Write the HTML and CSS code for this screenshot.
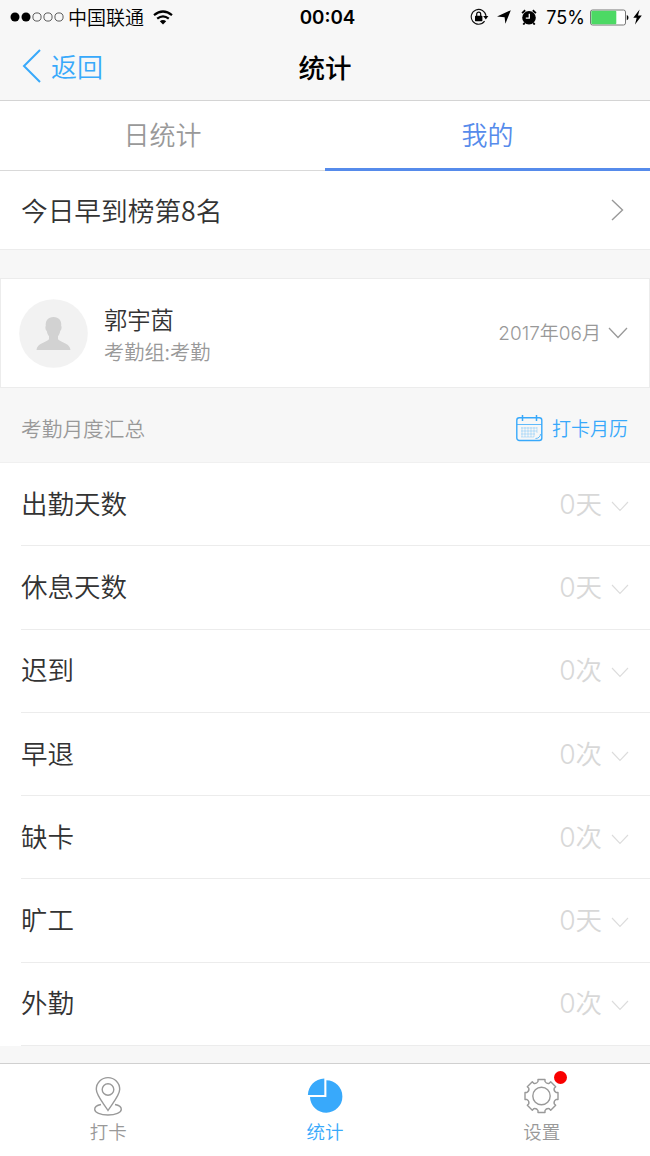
FILE: index.html
```html
<!DOCTYPE html>
<html lang="zh-CN">
<head>
<meta charset="UTF-8" />
<meta name="viewport" content="width=device-width, initial-scale=1.0" />
<title>统计</title>
<link rel="stylesheet" href="styles.css">
</head>
<body>

<!-- STATUS BAR -->
<div class="status">
  <div class="status-left">
    <svg class="signal" width="54" height="10" viewBox="0 0 54 10">
      <circle cx="5" cy="5" r="4.5" /><circle cx="16" cy="5" r="4.5" />
      <g fill="none" stroke="#333" stroke-width=".8"><circle cx="27" cy="5" r="4.1" /><circle cx="38" cy="5" r="4.1" /><circle cx="49" cy="5" r="4.1" /></g>
    </svg>
    <span class="carrier">中国联通</span>
    <svg class="wifi" width="20" height="15" viewBox="0 0 20 15">
      <g fill="none" stroke="#000" stroke-width="2.2"><path d="M1 5.2Q10-2.2 19 5.2" /><path d="M4.2 8.7Q10 4 15.8 8.7" /></g>
      <path d="M6.8 11.2Q10 8.6 13.2 11.2L10 14.4z" />
    </svg>
  </div>
  <div class="clock">00:04</div>
  <div class="status-right">
    <svg width="19" height="18" viewBox="0 0 19 18">
      <path d="M14.6 13.2A7.4 7.4 0 1 1 16 8" fill="none" stroke="#111" stroke-width="1.1" />
      <path d="M13.2 8h5.2l-2.6 3.4z" />
      <rect x="5" y="7.8" width="7.4" height="5.4" rx=".6" />
      <path d="M6.7 8V6.2a2 2 0 0 1 4 0V8" fill="none" stroke="#000" stroke-width="1.2" />
    </svg>
    <svg class="locate" width="14" height="14" viewBox="0 0 14 14"><path d="M13.8.2L8.4 13.8 7.6 7.2 0 6.6z" /></svg>
    <svg class="alarm" width="16" height="16" viewBox="0 0 16 16">
      <circle cx="8" cy="8.8" r="6.8" />
      <path d="M3.6 14l-1.3 1.6M12.4 14l1.3 1.6M1.1 4.1L4.2 1.3M14.9 4.1L11.8 1.3" stroke="#000" stroke-width="1.9" />
      <path d="M8.3 4.8v4.3H4.8" fill="none" stroke="#fff" stroke-width="1.3" />
    </svg>
    <span class="percent">75%</span>
    <svg class="battery" width="40" height="17" viewBox="0 0 40 17">
      <rect x=".5" y="1" width="35" height="15" rx="2" fill="#fff" stroke="#777" stroke-width="1" />
      <rect x="1.3" y="1.8" width="25" height="13.4" rx="1" fill="#4cd964" />
      <path d="M36.8 6c2.2.8 2.2 4.4 0 5.2z" />
    </svg>
    <svg class="bolt" width="9" height="16" viewBox="0 0 9 16"><path d="M6.6.5L.3 8.8h3.4L2 15.5l6.8-9H5z" /></svg>
  </div>
</div>

<!-- HEADER -->
<div class="header">
  <a class="back" href="#">
    <svg width="19" height="34" viewBox="0 0 19 34"><path d="M18 1L2 17l16 16" /></svg>
    <span>返回</span>
  </a>
  <h1>统计</h1>
</div>

<div class="tabs">
  <a class="tab" href="#">日统计</a>
  <a class="tab active" href="#">我的</a>
</div>

<a class="rank" href="#">
  <span>今日早到榜第8名</span>
  <svg width="13" height="22" viewBox="0 0 13 22"><path d="M1 1l10.5 10L1 21" /></svg>
</a>

<!-- PROFILE -->
<div class="profile">
  <svg class="avatar" width="69" height="69" viewBox="0 0 69 69">
    <circle cx="34.5" cy="34.5" r="34.3" fill="#f2f2f2" />
    <path d="M34.5 18c-5.5 0-8.2 3.5-7.7 9-.8.6-.4 4 1 5 .4 2.5 1.2 4 2.2 5.2v3C26.5 44 18 44 17.5 51h34c-.5-7-9-7-12.5-10.8v-3c1-1.2 1.8-2.7 2.2-5.2 1.4-1 1.8-4.4 1-5 .5-5.5-2.2-9-7.7-9z" fill="#d2d2d2" />
  </svg>
  <div class="who">
    <div class="name">郭宇茵</div>
    <div class="group">考勤组:考勤</div>
  </div>
  <div class="month">
    <span>2017年06月</span>
    <svg width="20" height="12" viewBox="0 0 20 12"><path d="M1 1l9 9.5L19 1" /></svg>
  </div>
</div>

<div class="summary">
  <span>考勤月度汇总</span>
  <a class="calendar" href="#">
    <svg width="27" height="28" viewBox="0 0 27 28" fill="none" stroke="#38a9fb">
      <rect x=".8" y="3.8" width="25" height="22.7" rx="2.5" stroke-width="1.4" />
      <path d="M1 10.5h25" stroke-width=".8" />
      <path d="M6.5 1v6M20.5 1v6" stroke-width="1.5" />
      <path d="M5 14h16M5 17h16M5 20h14M5 23h13M6 13v10M9 13v10M12 13v10M15 13v10M18 13v10M21 13v6" stroke-width=".6" opacity=".5" />
      <path d="M19.5 24.5c3 0 5-2 5-4.5" stroke-width=".8" />
    </svg>
    <span>打卡月历</span>
  </a>
</div>

<!-- MONTHLY STATS -->
<ul class="stats">
  <li><span>出勤天数</span><span class="value">0天</span><svg class="chev" viewBox="0 0 18 11"><path d="M1 1l8 8.5L17 1" /></svg></li>
  <li><span>休息天数</span><span class="value">0天</span><svg class="chev" viewBox="0 0 18 11"><path d="M1 1l8 8.5L17 1" /></svg></li>
  <li><span>迟到</span><span class="value">0次</span><svg class="chev" viewBox="0 0 18 11"><path d="M1 1l8 8.5L17 1" /></svg></li>
  <li><span>早退</span><span class="value">0次</span><svg class="chev" viewBox="0 0 18 11"><path d="M1 1l8 8.5L17 1" /></svg></li>
  <li><span>缺卡</span><span class="value">0次</span><svg class="chev" viewBox="0 0 18 11"><path d="M1 1l8 8.5L17 1" /></svg></li>
  <li><span>旷工</span><span class="value">0天</span><svg class="chev" viewBox="0 0 18 11"><path d="M1 1l8 8.5L17 1" /></svg></li>
  <li><span>外勤</span><span class="value">0次</span><svg class="chev" viewBox="0 0 18 11"><path d="M1 1l8 8.5L17 1" /></svg></li>
</ul>

<!-- BOTTOM NAVIGATION -->
<nav class="bottom">
  <a href="#">
    <svg width="40" height="42" viewBox="0 0 40 42" fill="none" stroke="#999" stroke-width="1.4">
      <path d="M20 35.5C16 29 8.3 20.5 8.3 14.3a11.7 11.7 0 0 1 23.4 0C31.7 20.5 24 29 20 35.5z" />
      <circle cx="20" cy="14.5" r="5.8" />
      <path d="M13 29.5c-4 .8-6.3 2.5-6.3 4.7C6.7 37.5 12.5 40 20 40s13.3-2.5 13.3-5.8c0-2.2-2.3-3.9-6.3-4.7" />
    </svg>
    <span>打卡</span>
  </a>
  <a class="active" href="#">
    <svg width="40" height="42" viewBox="0 0 40 42" fill="#38a9fb">
      <path d="M21.4 5.3A16.2 16.2 0 1 1 5 22h16.4z" />
      <path d="M19.3 3.5v16.6H2.9C3 11 10 3.7 19.3 3.5z" />
    </svg>
    <span>统计</span>
  </a>
  <a href="#">
    <svg width="40" height="42" viewBox="0 0 40 42" fill="none" stroke="#999" stroke-width="1.4">
      <path transform="translate(19.5 21)" stroke-linejoin="round" d="M-3.5-14.5V-16.5h7v2Q5-12 7.8-12.7L9.2-14.2 14.2-9.2 12.7-7.8Q12-5 14.5-3.5H16.5v7H14.5Q12 5 12.7 7.8L14.2 9.2 9.2 14.2 7.8 12.7Q5 12 3.5 14.5V16.5h-7V14.5Q-5 12-7.8 12.7L-9.2 14.2-14.2 9.2-12.7 7.8Q-12 5-14.5 3.5H-16.5v-7h2Q-12-5-12.7-7.8L-14.2-9.2-9.2-14.2-7.8-12.7Q-5-12-3.5-14.5z" />
      <circle cx="19.5" cy="21" r="8.7" />
    </svg>
    <i class="dot"></i>
    <span>设置</span>
  </a>
</nav>

</body>
</html>
```
FILE: styles.css
```css
:root{--blue:#38a9fb;--tab:#568beb;--bg:#f7f7f7;--line:#ececec;--gray:#999;}
*{box-sizing:border-box;}
body{
  margin:0;height:1156px;background:var(--bg);color:#333;
  font-family:"Noto Sans CJK SC DemiLight","Noto Sans CJK SC",sans-serif;font-weight:350;
  display:flex;flex-direction:column;overflow:hidden;
}
a{color:inherit;text-decoration:none;}
svg{display:block;flex:none;}

/* status bar ---------------------------------------------- */
.status{
  height:32px;display:grid;grid-template-columns:1fr auto 1fr;align-items:center;
  padding:0 8px 0 10px;color:#000;flex:none;
}
.status-left,.status-right{display:flex;align-items:center;height:32px;}
.status-right{justify-content:flex-end;}
.carrier{font-size:19px;line-height:32px;margin-left:4px;}
.wifi{margin-left:9px;}
.clock{font:600 18.8px/32px Inter,sans-serif;padding:2px 0 0 3px;}
.locate{margin-left:8px;}
.alarm{margin-left:10px;}
.percent{font:400 18px/32px Inter,sans-serif;margin-left:9px;padding-top:1px;}
.battery{margin-left:5px;}
.bolt{margin-left:3px;}

/* header -------------------------------------------------- */
.header{
  height:69px;display:grid;grid-template-columns:1fr auto 1fr;align-items:center;
  border-bottom:1px solid #d4d4d4;flex:none;
}
.header h1{margin:0;font:500 26.5px/67px "Noto Sans CJK SC",sans-serif;color:#000;}
.back{display:flex;align-items:center;gap:10px;padding-left:22px;color:var(--blue);font-size:26px;}
.back svg{fill:none;stroke:var(--blue);stroke-width:2;}
.back span{padding-bottom:2px;}

.tabs{height:70px;display:flex;background:#fff;flex:none;}
.tab{
  flex:1;text-align:center;font-size:26px;line-height:66px;color:var(--gray);
  border-bottom:1px solid #d9d9d9;
}
.tab.active{color:var(--tab);border-bottom:3px solid var(--tab);}

.rank{
  height:79px;display:flex;align-items:center;justify-content:space-between;
  padding:0 26px 0 21px;background:#fff;font-size:26.7px;border-bottom:1px solid var(--line);flex:none;
}
.rank span{padding-bottom:1px;}
.rank svg{fill:none;stroke:#999;stroke-width:1.4;}

/* profile ------------------------------------------------- */
.profile{
  height:110px;margin-top:28px;display:flex;align-items:center;
  padding:0 21px 0 18px;background:#fff;border:1px solid var(--line);flex:none;
}
.who{margin-left:16px;padding-top:4px;}
.name{font-size:23.3px;line-height:32px;}
.group{font-size:20.2px;line-height:33px;color:var(--gray);}
.month{
  margin-left:auto;display:flex;align-items:center;gap:7px;color:var(--gray);
  font-family:Inter,"Noto Sans CJK SC DemiLight","Noto Sans CJK SC",sans-serif;font-size:19px;
}
.month span{padding-bottom:4px;}
.month svg{fill:none;stroke:#999;stroke-width:1.3;}

.summary{
  height:75px;display:flex;align-items:center;justify-content:space-between;
  padding:5px 22px 0 21px;font-size:20.7px;color:var(--gray);border-bottom:1px solid #f0f0f0;flex:none;
}
.calendar{display:flex;align-items:center;gap:9px;color:var(--blue);font-size:19px;}

/* stats list ---------------------------------------------- */
.stats{margin:0;padding:0 0 0 21px;list-style:none;background:#fff;flex:none;}
.stats li{
  height:83.3px;display:flex;align-items:center;padding:0 21px 4px 0;
  font-size:26.5px;border-bottom:1px solid var(--line);
}
.value{margin-left:auto;color:#d8d8d8;font-family:Inter,"Noto Sans CJK SC DemiLight","Noto Sans CJK SC",sans-serif;font-weight:300;}
.chev{width:18px;height:11px;margin:8px 0 0 9px;fill:none;stroke:#dcdcdc;stroke-width:1.1;}

/* bottom navigation --------------------------------------- */
.bottom{
  margin-top:auto;height:93px;display:flex;background:#fff;border-top:1px solid #d0d0d0;flex:none;
}
.bottom a{
  flex:1;position:relative;display:flex;flex-direction:column;align-items:center;
  padding-top:11px;font-size:18.5px;line-height:28px;color:var(--gray);
}
.bottom .active{color:var(--blue);}
.dot{position:absolute;top:7px;left:calc(50% + 12px);width:13px;height:13px;border-radius:50%;background:#f90000;}
```
